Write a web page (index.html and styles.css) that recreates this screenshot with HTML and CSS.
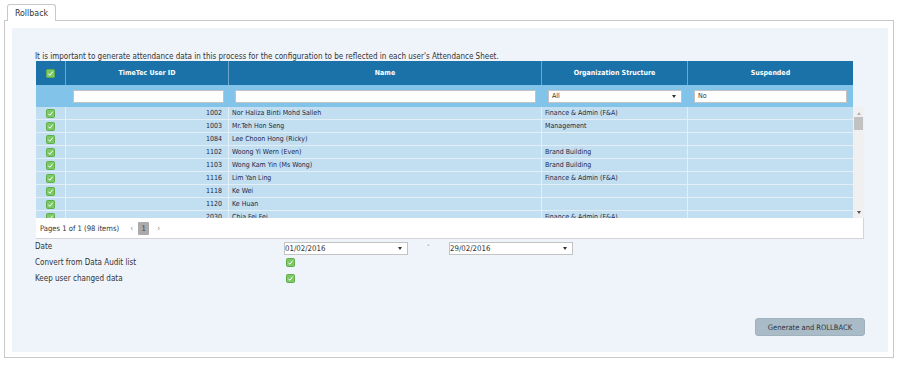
FILE: index.html
```html
<!DOCTYPE html>
<html>
<head>
<meta charset="utf-8">
<link rel="stylesheet" href="styles.css">
</head>
<body>
<div class="page">
  <div class="tabs"><div class="tab">Rollback</div></div>
  <div class="frame">
    <div class="panel">
      <div class="note">It is important to generate attendance data in this process for the configuration to be reflected in each user's Attendance Sheet.</div>
      <div class="grid">
        <div class="head">
          <div class="hrow">
            <div class="c c0"><svg class="cb" viewBox="0 0 9 9"><rect x="0.5" y="0.5" width="8" height="8" rx="1" fill="#7cc766" stroke="#5fae4a"/><polyline points="2.3,4.6 3.8,6.3 6.8,2.6" fill="none" stroke="#fff" stroke-width="1"/></svg></div>
            <div class="c c1">TimeTec User ID</div>
            <div class="c c2">Name</div>
            <div class="c c3">Organization Structure</div>
            <div class="c c4">Suspended</div>
          </div>
          <div class="frow">
            <div class="c c0"></div>
            <div class="c c1"><div class="inp"></div></div>
            <div class="c c2"><div class="inp"></div></div>
            <div class="c c3"><div class="inp sel"><span>All</span><i class="caret"></i></div></div>
            <div class="c c4"><div class="inp"><span>No</span></div></div>
          </div>
        </div>
        <div class="bodywrap">
          <div class="rows">
            <div class="drow"><div class="c c0"><svg class="cb" viewBox="0 0 9 9"><rect x="0.5" y="0.5" width="8" height="8" rx="1" fill="#7cc766" stroke="#5fae4a"/><polyline points="2.3,4.6 3.8,6.3 6.8,2.6" fill="none" stroke="#fff" stroke-width="1"/></svg></div><div class="c c1">1002</div><div class="c c2">Nor Haliza Binti Mohd Salleh</div><div class="c c3">Finance &amp; Admin (F&amp;A)</div><div class="c c4"></div></div>
            <div class="drow"><div class="c c0"><svg class="cb" viewBox="0 0 9 9"><rect x="0.5" y="0.5" width="8" height="8" rx="1" fill="#7cc766" stroke="#5fae4a"/><polyline points="2.3,4.6 3.8,6.3 6.8,2.6" fill="none" stroke="#fff" stroke-width="1"/></svg></div><div class="c c1">1003</div><div class="c c2">Mr.Teh Hon Seng</div><div class="c c3">Management</div><div class="c c4"></div></div>
            <div class="drow"><div class="c c0"><svg class="cb" viewBox="0 0 9 9"><rect x="0.5" y="0.5" width="8" height="8" rx="1" fill="#7cc766" stroke="#5fae4a"/><polyline points="2.3,4.6 3.8,6.3 6.8,2.6" fill="none" stroke="#fff" stroke-width="1"/></svg></div><div class="c c1">1084</div><div class="c c2">Lee Choon Hong (Ricky)</div><div class="c c3"></div><div class="c c4"></div></div>
            <div class="drow"><div class="c c0"><svg class="cb" viewBox="0 0 9 9"><rect x="0.5" y="0.5" width="8" height="8" rx="1" fill="#7cc766" stroke="#5fae4a"/><polyline points="2.3,4.6 3.8,6.3 6.8,2.6" fill="none" stroke="#fff" stroke-width="1"/></svg></div><div class="c c1">1102</div><div class="c c2">Woong Yi Wern (Even)</div><div class="c c3">Brand Building</div><div class="c c4"></div></div>
            <div class="drow"><div class="c c0"><svg class="cb" viewBox="0 0 9 9"><rect x="0.5" y="0.5" width="8" height="8" rx="1" fill="#7cc766" stroke="#5fae4a"/><polyline points="2.3,4.6 3.8,6.3 6.8,2.6" fill="none" stroke="#fff" stroke-width="1"/></svg></div><div class="c c1">1103</div><div class="c c2">Wong Kam Yin (Ms Wong)</div><div class="c c3">Brand Building</div><div class="c c4"></div></div>
            <div class="drow"><div class="c c0"><svg class="cb" viewBox="0 0 9 9"><rect x="0.5" y="0.5" width="8" height="8" rx="1" fill="#7cc766" stroke="#5fae4a"/><polyline points="2.3,4.6 3.8,6.3 6.8,2.6" fill="none" stroke="#fff" stroke-width="1"/></svg></div><div class="c c1">1116</div><div class="c c2">Lim Yan Ling</div><div class="c c3">Finance &amp; Admin (F&amp;A)</div><div class="c c4"></div></div>
            <div class="drow"><div class="c c0"><svg class="cb" viewBox="0 0 9 9"><rect x="0.5" y="0.5" width="8" height="8" rx="1" fill="#7cc766" stroke="#5fae4a"/><polyline points="2.3,4.6 3.8,6.3 6.8,2.6" fill="none" stroke="#fff" stroke-width="1"/></svg></div><div class="c c1">1118</div><div class="c c2">Ke Wei</div><div class="c c3"></div><div class="c c4"></div></div>
            <div class="drow"><div class="c c0"><svg class="cb" viewBox="0 0 9 9"><rect x="0.5" y="0.5" width="8" height="8" rx="1" fill="#7cc766" stroke="#5fae4a"/><polyline points="2.3,4.6 3.8,6.3 6.8,2.6" fill="none" stroke="#fff" stroke-width="1"/></svg></div><div class="c c1">1120</div><div class="c c2">Ke Huan</div><div class="c c3"></div><div class="c c4"></div></div>
            <div class="drow"><div class="c c0"><svg class="cb" viewBox="0 0 9 9"><rect x="0.5" y="0.5" width="8" height="8" rx="1" fill="#7cc766" stroke="#5fae4a"/><polyline points="2.3,4.6 3.8,6.3 6.8,2.6" fill="none" stroke="#fff" stroke-width="1"/></svg></div><div class="c c1">2030</div><div class="c c2">Chia Fei Fei</div><div class="c c3">Finance &amp; Admin (F&amp;A)</div><div class="c c4"></div></div>
            <div class="drow"><div class="c c0"><svg class="cb" viewBox="0 0 9 9"><rect x="0.5" y="0.5" width="8" height="8" rx="1" fill="#7cc766" stroke="#5fae4a"/><polyline points="2.3,4.6 3.8,6.3 6.8,2.6" fill="none" stroke="#fff" stroke-width="1"/></svg></div><div class="c c1">2031</div><div class="c c2"></div><div class="c c3"></div><div class="c c4"></div></div>
          </div>
          <div class="scroll">
            <i class="up"></i>
            <div class="thumb"></div>
            <div class="track"></div>
            <i class="down"></i>
          </div>
        </div>
        <div class="pager">
          <span class="ptext">Pages 1 of 1 (98 items)</span>
          <span class="parr">‹</span>
          <span class="pnum">1</span>
          <span class="parr">›</span>
        </div>
      </div>
      <div class="opts">
        <div class="lbl">Date</div>
        <div class="ctl">
          <div class="inp date"><span>01/02/2016</span><i class="caret"></i></div>
          <span class="dash">-</span>
          <div class="inp date"><span>29/02/2016</span><i class="caret"></i></div>
        </div>
        <div class="lbl">Convert from Data Audit list</div>
        <div class="ctl"><svg class="cb" viewBox="0 0 9 9"><rect x="0.5" y="0.5" width="8" height="8" rx="1" fill="#7cc766" stroke="#5fae4a"/><polyline points="2.3,4.6 3.8,6.3 6.8,2.6" fill="none" stroke="#fff" stroke-width="1"/></svg></div>
        <div class="lbl">Keep user changed data</div>
        <div class="ctl"><svg class="cb" viewBox="0 0 9 9"><rect x="0.5" y="0.5" width="8" height="8" rx="1" fill="#7cc766" stroke="#5fae4a"/><polyline points="2.3,4.6 3.8,6.3 6.8,2.6" fill="none" stroke="#fff" stroke-width="1"/></svg></div>
      </div>
      <div class="actions"><div class="btn">Generate and ROLLBACK</div></div>
    </div>
  </div>
</div>
</body>
</html>
```

FILE: styles.css
```css
* { box-sizing: border-box; }
html, body { margin: 0; padding: 0; background: #fff; }
body {
  font-family: "DejaVu Sans Condensed", "DejaVu Sans", sans-serif;
  font-stretch: condensed;
  font-size: 7px;
  color: #333;
}
.page { padding: 4px 6px 0 4px; width: 900px; }
.tabs { display: flex; padding-left: 3px; height: 16px; }
.tab {
  width: 49px; height: 17px;
  border: 1px solid #c9c9c9; border-bottom: none;
  border-radius: 3px 3px 0 0;
  background: #fff;
  font-size: 8.8px; color: #333;
  display: flex; align-items: center; justify-content: center;
  position: relative; z-index: 1;
}
.frame {
  border: 1px solid #c9c9c9;
  padding: 7px 5px 5px 7px;
  height: 338px;
}
.panel {
  background: #eff4fb;
  padding: 24px 25px 19px 23px;
  height: 100%;
}
.note { line-height: 9px; height: 9px; color: #333; font-size: 8px; }
.grid { width: 828px; margin-left: 1px; }
.head { width: 817px; }
.hrow { display: flex; height: 24px; background: #1a72a9; color: #fff; font-weight: bold; }
.hrow .c { display: flex; align-items: center; justify-content: center; border-right: 1px solid #6fa6c9; }
.hrow .c:last-child { border-right: none; }
.c0 { width: 30px; flex: none; }
.c1 { width: 163px; flex: none; }
.c2 { width: 313px; flex: none; }
.c3 { width: 146px; flex: none; }
.c4 { width: 165px; flex: none; }
.frow { display: flex; height: 22px; background: #82c3ea; }
.frow .c { display: flex; align-items: center; padding: 0 6px; }
.inp {
  background: #fff; border: 1px solid #c3c3c3;
  height: 13px; width: 100%;
  display: flex; align-items: center; justify-content: space-between;
  padding: 0 5px 0 3px; color: #333;
}
.frow .c1 { padding-left: 7px; padding-right: 5px; }
.caret { width: 0; height: 0; border-left: 2.5px solid transparent; border-right: 2.5px solid transparent; border-top: 3px solid #333; }
.bodywrap { display: flex; height: 111px; overflow: hidden; }
.rows { width: 817px; background: #c2def1; overflow: hidden; }
.drow { display: flex; height: 13px; border-top: 1px solid #e3eef7; color: #1d2747; }
.drow:first-child { border-top: none; height: 12px; }
.drow .c { display: flex; align-items: center; border-right: 1px solid #e3eef7; }
.drow .c0 { justify-content: center; }
.drow .c1 { justify-content: flex-end; padding-right: 6px; }
.drow .c2, .drow .c3 { padding-left: 3px; }
.drow .c4 { border-right: none; }
.cb { width: 9px; height: 9px; display: block; }
.scroll { width: 11px; background: #f0f0f0; display: flex; flex-direction: column; align-items: center; padding: 5px 0 4px; }
.up { width: 0; height: 0; border-left: 2.5px solid transparent; border-right: 2.5px solid transparent; border-bottom: 3px solid #b5b5b5; }
.down { width: 0; height: 0; border-left: 2.5px solid transparent; border-right: 2.5px solid transparent; border-top: 3px solid #555; }
.thumb { width: 9px; height: 13px; background: #c1c1c1; margin-top: 2px; }
.track { flex: 1; }
.pager {
  height: 21px; background: #fff;
  border-right: 1px solid #d4d4d4; border-bottom: 1px solid #d4d4d4;
  display: flex; align-items: center; padding-left: 4px;
  color: #333; font-size: 7.6px;
}
.ptext { margin-right: 8px; }
.parr { color: #888; font-size: 8px; width: 9px; text-align: center; }
.pnum { width: 11px; height: 13px; background: #aaa; color: #444; display: flex; align-items: center; justify-content: center; margin: 0 5px 0 2px; border-radius: 1px; }
.opts { display: grid; grid-template-columns: 249px auto; grid-template-rows: 16px 16px 16px; margin-top: 3px; }
.lbl { line-height: 9px; color: #333; font-size: 8px; }
.ctl { display: flex; align-items: flex-start; }
.ctl .cb { margin-left: 2px; margin-top: 0; }
.date { width: 124px; padding-left: 0; font-size: 7.8px; }
.dash { width: 41px; text-align: center; color: #666; line-height: 7px; }
.actions { display: flex; justify-content: flex-end; margin-top: 28px; margin-right: -2px; }
.btn {
  width: 110px; height: 18px;
  background: #a9bbc7; border: 1px solid #9fb1bd; border-radius: 3px;
  display: flex; align-items: center; justify-content: center;
  color: #2a3440; font-size: 7.5px;
}
```
